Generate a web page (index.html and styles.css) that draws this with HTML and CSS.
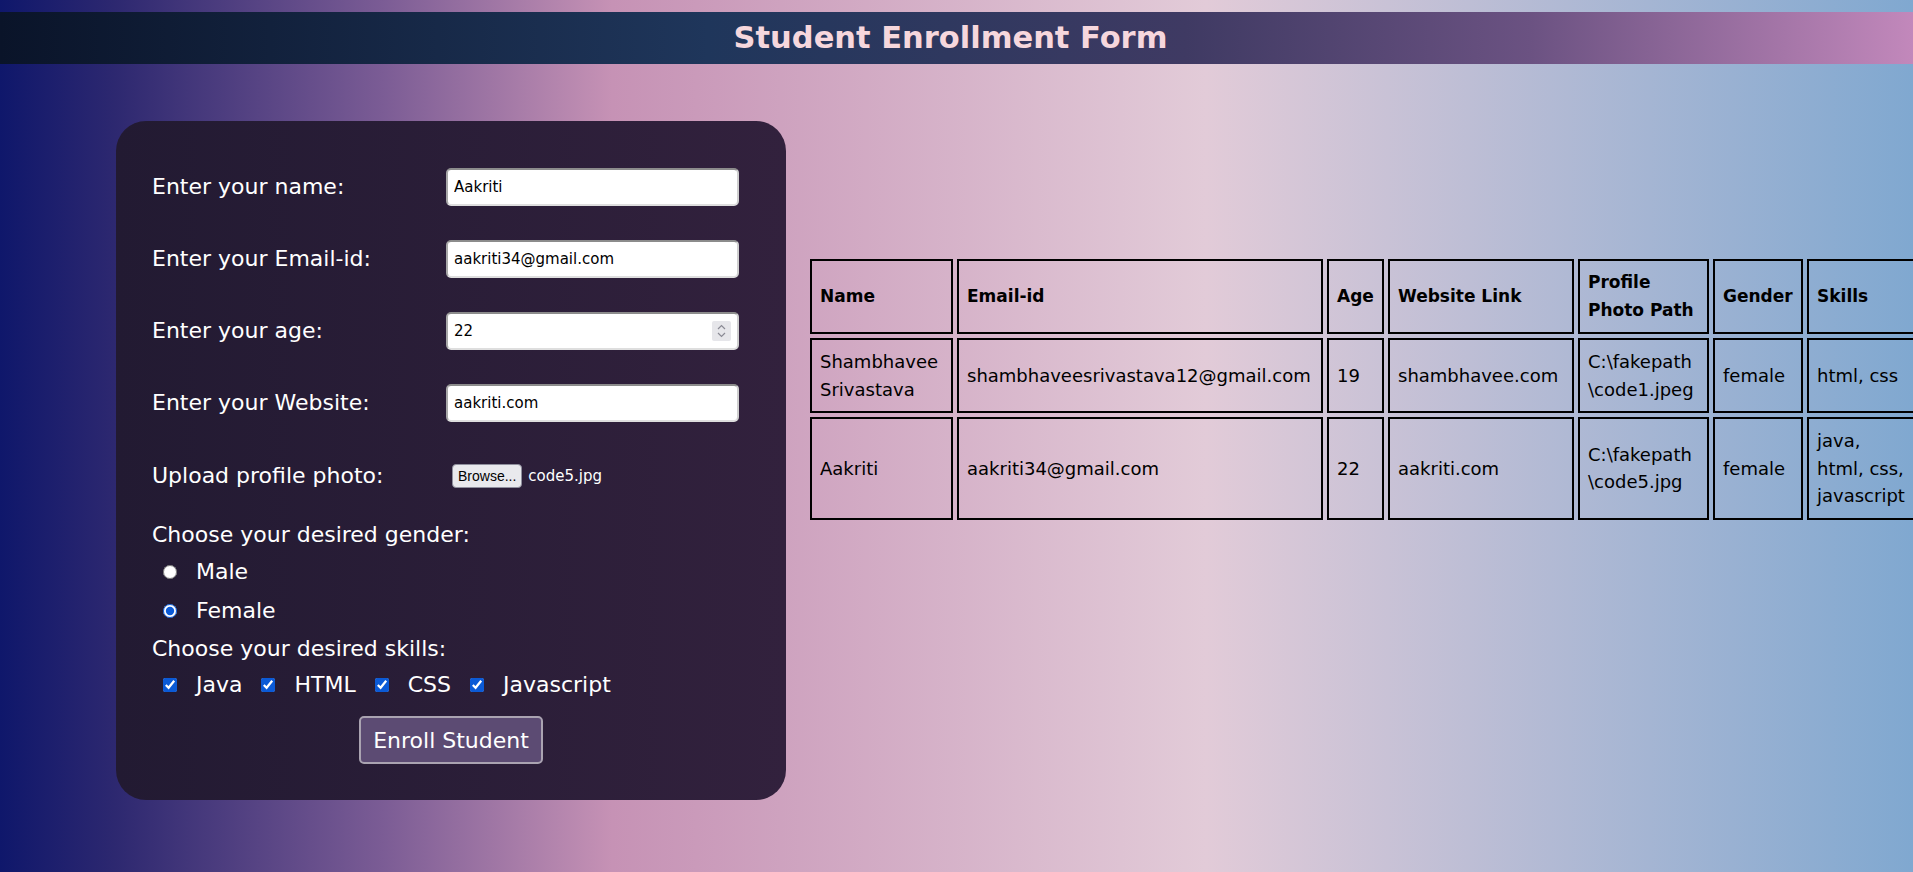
FILE: index.html
```html
<!DOCTYPE html>
<html lang="en">
<head>
<meta charset="utf-8">
<title>Student Enrollment Form</title>
<link rel="stylesheet" href="styles.css">
</head>
<body>
<header class="topbar">
  <h1 class="title">Student Enrollment Form</h1>
</header>
<main class="main">
  <form class="card">
    <div class="field">
      <label class="field-label" for="name">Enter your name:</label>
      <input class="text-input" id="name" type="text" value="Aakriti">
    </div>
    <div class="field">
      <label class="field-label" for="email">Enter your Email-id:</label>
      <input class="text-input" id="email" type="text" value="aakriti34@gmail.com">
    </div>
    <div class="field">
      <label class="field-label" for="age">Enter your age:</label>
      <div class="age-wrap">
        <input class="text-input" id="age" type="number" value="22">
        <span class="spinner">
          <svg width="11" height="16" viewBox="0 0 11 16"><path d="M2 6 L5.5 2.5 L9 6" fill="none" stroke="#8a8a94" stroke-width="1.2"/><path d="M2 10 L5.5 13.5 L9 10" fill="none" stroke="#8a8a94" stroke-width="1.2"/></svg>
        </span>
      </div>
    </div>
    <div class="field field-last-text">
      <label class="field-label" for="site">Enter your Website:</label>
      <input class="text-input" id="site" type="text" value="aakriti.com">
    </div>
    <div class="field field-upload">
      <span class="field-label">Upload profile photo:</span>
      <div class="file">
        <span class="file-btn">Browse...</span>
        <span class="file-name">code5.jpg</span>
      </div>
    </div>
    <p class="group-label">Choose your desired gender:</p>
    <div class="option-row">
      <input class="radio" type="radio" name="gender" id="male">
      <label class="option-label" for="male">Male</label>
    </div>
    <div class="option-row option-row-female">
      <input class="radio" type="radio" name="gender" id="female" checked>
      <label class="option-label" for="female">Female</label>
    </div>
    <p class="group-label group-label-skills">Choose your desired skills:</p>
    <div class="check-row">
      <input class="check" type="checkbox" id="java" checked>
      <label class="option-label" for="java">Java</label>
      <input class="check" type="checkbox" id="html" checked>
      <label class="option-label" for="html">HTML</label>
      <input class="check" type="checkbox" id="css" checked>
      <label class="option-label" for="css">CSS</label>
      <input class="check" type="checkbox" id="js" checked>
      <label class="option-label" for="js">Javascript</label>
    </div>
    <div class="actions">
      <button class="enroll" type="button">Enroll Student</button>
    </div>
  </form>

  <table class="students">
    <thead>
      <tr>
        <th class="c-name">Name</th>
        <th class="c-email">Email-id</th>
        <th class="c-age">Age</th>
        <th class="c-site">Website Link</th>
        <th class="c-photo">Profile Photo Path</th>
        <th class="c-gender">Gender</th>
        <th class="c-skills">Skills</th>
      </tr>
    </thead>
    <tbody>
      <tr>
        <td>Shambhavee Srivastava</td>
        <td>shambhaveesrivastava12@gmail.com</td>
        <td>19</td>
        <td>shambhavee.com</td>
        <td>C:\fakepath<wbr>\code1.jpeg</td>
        <td>female</td>
        <td class="skills-cell">html, css</td>
      </tr>
      <tr>
        <td>Aakriti</td>
        <td>aakriti34@gmail.com</td>
        <td>22</td>
        <td>aakriti.com</td>
        <td>C:\fakepath<wbr>\code5.jpg</td>
        <td>female</td>
        <td class="skills-cell">java, html, css, javascript</td>
      </tr>
    </tbody>
  </table>
</main>
</body>
</html>
```

FILE: styles.css
```css
html, body {
  margin: 0;
  padding: 0;
}

body {
  min-height: 100vh;
  overflow: hidden;
  font-family: "DejaVu Sans", "Noto Sans", sans-serif;
  background: linear-gradient(to right,
    #0f176b 0%,
    #2d2870 6%,
    #7b5c95 20%,
    #c692b5 32%,
    #e2cbd8 63%,
    #80a8d0 100%);
}

.topbar {
  margin-top: 12px;
  height: 52px;
  background: linear-gradient(to right,
    #0a1429 0%,
    #1f365b 37%,
    #3f3a63 62%,
    #6b5282 80%,
    #c288bb 100%);
}

.title {
  margin: 0;
  height: 52px;
  padding-right: 12px;
  line-height: 52px;
  text-align: center;
  font-family: "DejaVu Sans", sans-serif;
  font-weight: bold;
  font-size: 30.5px;
  color: #f6d7dd;
}

.main {
  display: flex;
  align-items: flex-start;
  gap: 20px;
  padding: 57px 0 0 116px;
}

/* ---------- form card ---------- */
.card {
  flex: 0 0 auto;
  box-sizing: border-box;
  width: 670px;
  padding: 47px 46px 36px 36px;
  border-radius: 30px;
  background: linear-gradient(to right, #221a32, #32213d);
  color: #ffffff;
  display: flex;
  flex-direction: column;
}

.field {
  display: flex;
  align-items: center;
  height: 38px;
  margin-bottom: 34px;
}

.field-last-text {
  margin-bottom: 35px;
}

.field-upload {
  margin-bottom: 0;
}

.field-label {
  flex: 0 0 294px;
  font-size: 22px;
  line-height: 30px;
}

.text-input {
  box-sizing: border-box;
  width: 293px;
  height: 38px;
  margin: 0;
  padding: 0 6px;
  border: 2px solid;
  border-color: #8c8c8c #cfcfcf #dedede #a8a8a8;
  border-radius: 5px;
  background: #ffffff;
  color: #000000;
  font-family: "DejaVu Sans", sans-serif;
  font-size: 15px;
  outline: none;
}

.age-wrap {
  position: relative;
  width: 293px;
  height: 38px;
}

.age-wrap .text-input {
  -moz-appearance: textfield;
  appearance: textfield;
}

.age-wrap .text-input::-webkit-inner-spin-button,
.age-wrap .text-input::-webkit-outer-spin-button {
  -webkit-appearance: none;
  margin: 0;
}

.spinner {
  position: absolute;
  right: 8px;
  top: 9px;
  width: 19px;
  height: 20px;
  border-radius: 2px;
  background: #e6e6ea;
  display: flex;
  align-items: center;
  justify-content: center;
}

.file {
  display: flex;
  align-items: center;
  gap: 6px;
  padding-left: 6px;
}

.file-btn {
  box-sizing: border-box;
  height: 24px;
  padding: 0 5px;
  border: 1px solid #8f8f9d;
  border-radius: 4px;
  background: #e9e9ed;
  color: #000000;
  font-family: "Liberation Sans", Arial, sans-serif;
  font-size: 14px;
  line-height: 22px;
}

.file-name {
  font-size: 15px;
  color: #ffffff;
}

.group-label {
  margin: 25px 0 0;
  font-size: 22px;
  line-height: 30px;
}

.group-label-skills {
  margin-top: 8px;
}

.option-row {
  display: flex;
  align-items: center;
  gap: 19px;
  height: 30px;
  margin-top: 7px;
  padding-left: 11px;
}

.option-row-female {
  margin-top: 9px;
}

.option-label {
  font-size: 22px;
  line-height: 30px;
}

.radio,
.check {
  width: 14px;
  height: 14px;
  margin: 0;
  accent-color: #0b5ad6;
}

.check-row {
  display: flex;
  align-items: center;
  gap: 19px;
  height: 30px;
  margin-top: 6px;
  padding-left: 11px;
}

.actions {
  display: flex;
  justify-content: center;
  margin-top: 16px;
  padding-left: 10px;
}

.enroll {
  box-sizing: border-box;
  height: 48px;
  padding: 0 12px;
  border: 2px solid #aaa3b1;
  border-radius: 5px;
  background: #5c4b73;
  color: #ffffff;
  font-family: "DejaVu Sans", sans-serif;
  font-size: 22px;
}

/* ---------- table ---------- */
.students {
  flex: 0 0 auto;
  margin-top: 134px;
  table-layout: fixed;
  width: 1123px;
  border-collapse: separate;
  border-spacing: 4px;
  color: #000000;
}

.students th,
.students td {
  box-sizing: border-box;
  border: 2px solid #000000;
  padding: 8px;
  text-align: left;
  vertical-align: middle;
  line-height: 27.5px;
}

.students th {
  font-family: "DejaVu Sans", sans-serif;
  font-weight: bold;
  font-size: 17px;
}

.students td {
  font-family: "DejaVu Sans", sans-serif;
  font-size: 18px;
}

.students .skills-cell,
.students .c-skills {
  padding-right: 16px;
}

.c-name { width: 143px; }
.c-email { width: 366px; }
.c-age { width: 57px; }
.c-site { width: 186px; }
.c-photo { width: 131px; }
.c-gender { width: 90px; }
.c-skills { width: 118px; }
```
